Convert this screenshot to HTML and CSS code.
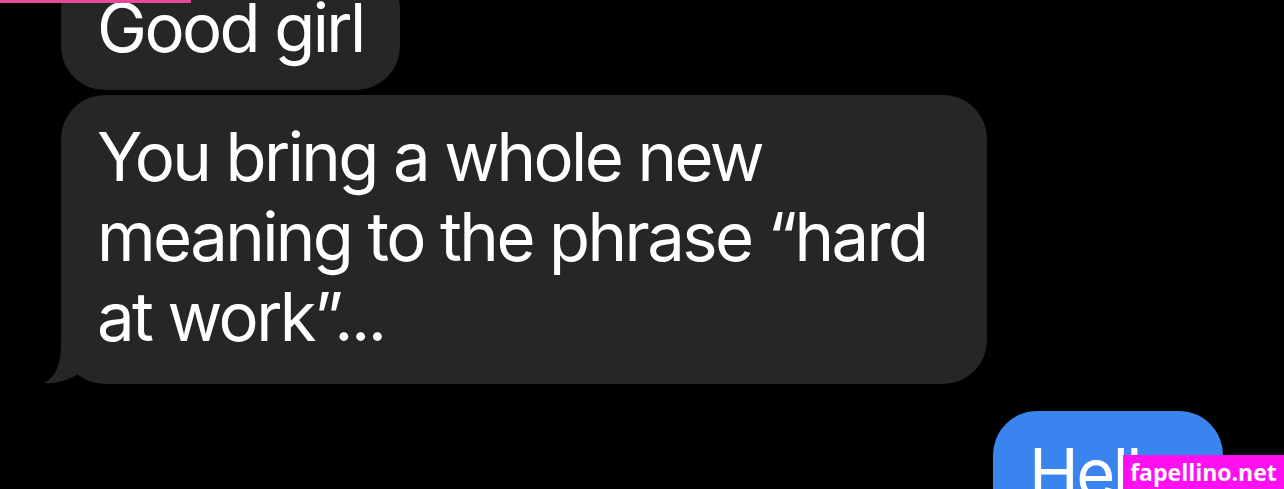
FILE: index.html
```html
<!DOCTYPE html>
<html lang="en">
<head>
  <meta charset="UTF-8">
  <meta name="viewport" content="width=device-width, initial-scale=1.0">
  <title>Messages</title>
  <link rel="stylesheet" href="styles.css">
</head>
<body>
  <div class="top-bar"></div>

  <div class="thread">
    <div class="bubble received short">Good girl</div>
    <div class="bubble received long">
      You bring a whole new meaning to the phrase “hard at work”...
      <svg class="tail" width="40" height="40" viewBox="0 0 40 40">
        <path d="M17 0 C17 22 11 33 0 39 C12 40 25 36 36 29 L36 0 Z" fill="#262628"/>
      </svg>
    </div>
    <div class="bubble sent">Hello</div>
  </div>

  <div class="watermark">fapellino.net</div>
</body>
</html>
```

FILE: styles.css
```css
/* Reset basic styles */
* {
  margin: 0;
  padding: 0;
  box-sizing: border-box;
}

body {
  background: #000;
  color: #fff;
  font-family: 'Inter', 'Noto Sans', sans-serif;
  height: 489px;
  overflow: hidden;
  position: relative;
}

.top-bar {
  position: absolute;
  top: 0;
  left: 0;
  width: 191px;
  height: 3px;
  background: #e44a97;
  z-index: 2;
}

.thread {
  display: flex;
  flex-direction: column;
  padding: 0 61px;
  margin-top: -34px;
}

.bubble {
  position: relative;
  max-width: 926px;
  padding: 22px 36px 27px;
  border-radius: 44px;
  font-size: 67px;
  line-height: 80px;
  letter-spacing: -2.6px;
}

.received {
  align-self: flex-start;
  background: #262628;
}

.received + .received {
  margin-top: 5px;
}

.short {
  padding-bottom: 22px;
}

.long {
  width: 926px;
}

.tail {
  position: absolute;
  left: -17px;
  bottom: 0;
}

.sent {
  align-self: flex-end;
  min-width: 230px;
  background: #3a84f0;
  margin-top: 27px;
}

.watermark {
  position: absolute;
  right: 0;
  bottom: 0;
  width: 161px;
  height: 34px;
  background: #ff10f0;
  color: #fff;
  font-family: 'Open Sans', sans-serif;
  font-weight: 700;
  font-size: 23px;
  line-height: 34px;
  text-align: center;
}
```
